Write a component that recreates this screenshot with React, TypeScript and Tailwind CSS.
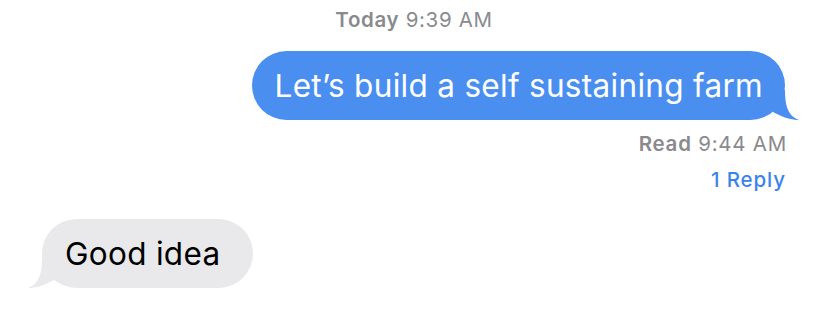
import React from "react";

const font = { fontFamily: "Inter, 'Noto Sans', sans-serif" };

function Tail({ color, flip }: { color: string; flip?: boolean }) {
  return (
    <svg
      width="26"
      height="30"
      viewBox="0 0 26 30"
      className={flip ? "absolute bottom-0 left-[-14px] -scale-x-100" : "absolute bottom-0 right-[-14px]"}
    >
      <path d="M0 0 L12 0 C12 18 16 26 26 30 C19 30 11 28 0 22 Z" fill={color} />
    </svg>
  );
}

export default function App() {
  return (
    <div className="w-[828px] h-[325px] bg-white flex flex-col" style={font}>
      <div className="pt-[8px] text-center text-[20.5px] leading-[24px] text-[#8a8a8e] tracking-[0.65px]">
        <span className="font-semibold">Today</span> 9:39 AM
      </div>
      <div className="flex justify-end pr-[43px] mt-[19px]">
        <div className="relative">
          <div className="relative z-10 h-[69px] rounded-[35px] bg-[#4a8ff0] pl-[23px] pr-[22px] flex items-center text-white text-[31.5px] tracking-[0.3px]">
            Let’s build a self sustaining farm
          </div>
          <Tail color="#4a8ff0" />
        </div>
      </div>
      <div className="flex justify-end pr-[41px] mt-[12px] text-[20.5px] leading-[24px] text-[#8a8a8e] tracking-[0.75px]">
        <span>
          <span className="font-semibold">Read</span> 9:44 AM
        </span>
      </div>
      <div className="flex justify-end pr-[42px] mt-[12px] text-[20.5px] leading-[24px] text-[#3b83ec] font-medium tracking-[0.9px]">
        1 Reply
      </div>
      <div className="flex justify-start pl-[42px] mt-[27px]">
        <div className="relative">
          <div className="relative z-10 h-[69px] rounded-[35px] bg-[#e9e9eb] pl-[23px] pr-[33px] flex items-center text-black text-[31.5px] tracking-[0.3px]">
            Good idea
          </div>
          <Tail color="#e9e9eb" flip />
        </div>
      </div>
    </div>
  );
}
